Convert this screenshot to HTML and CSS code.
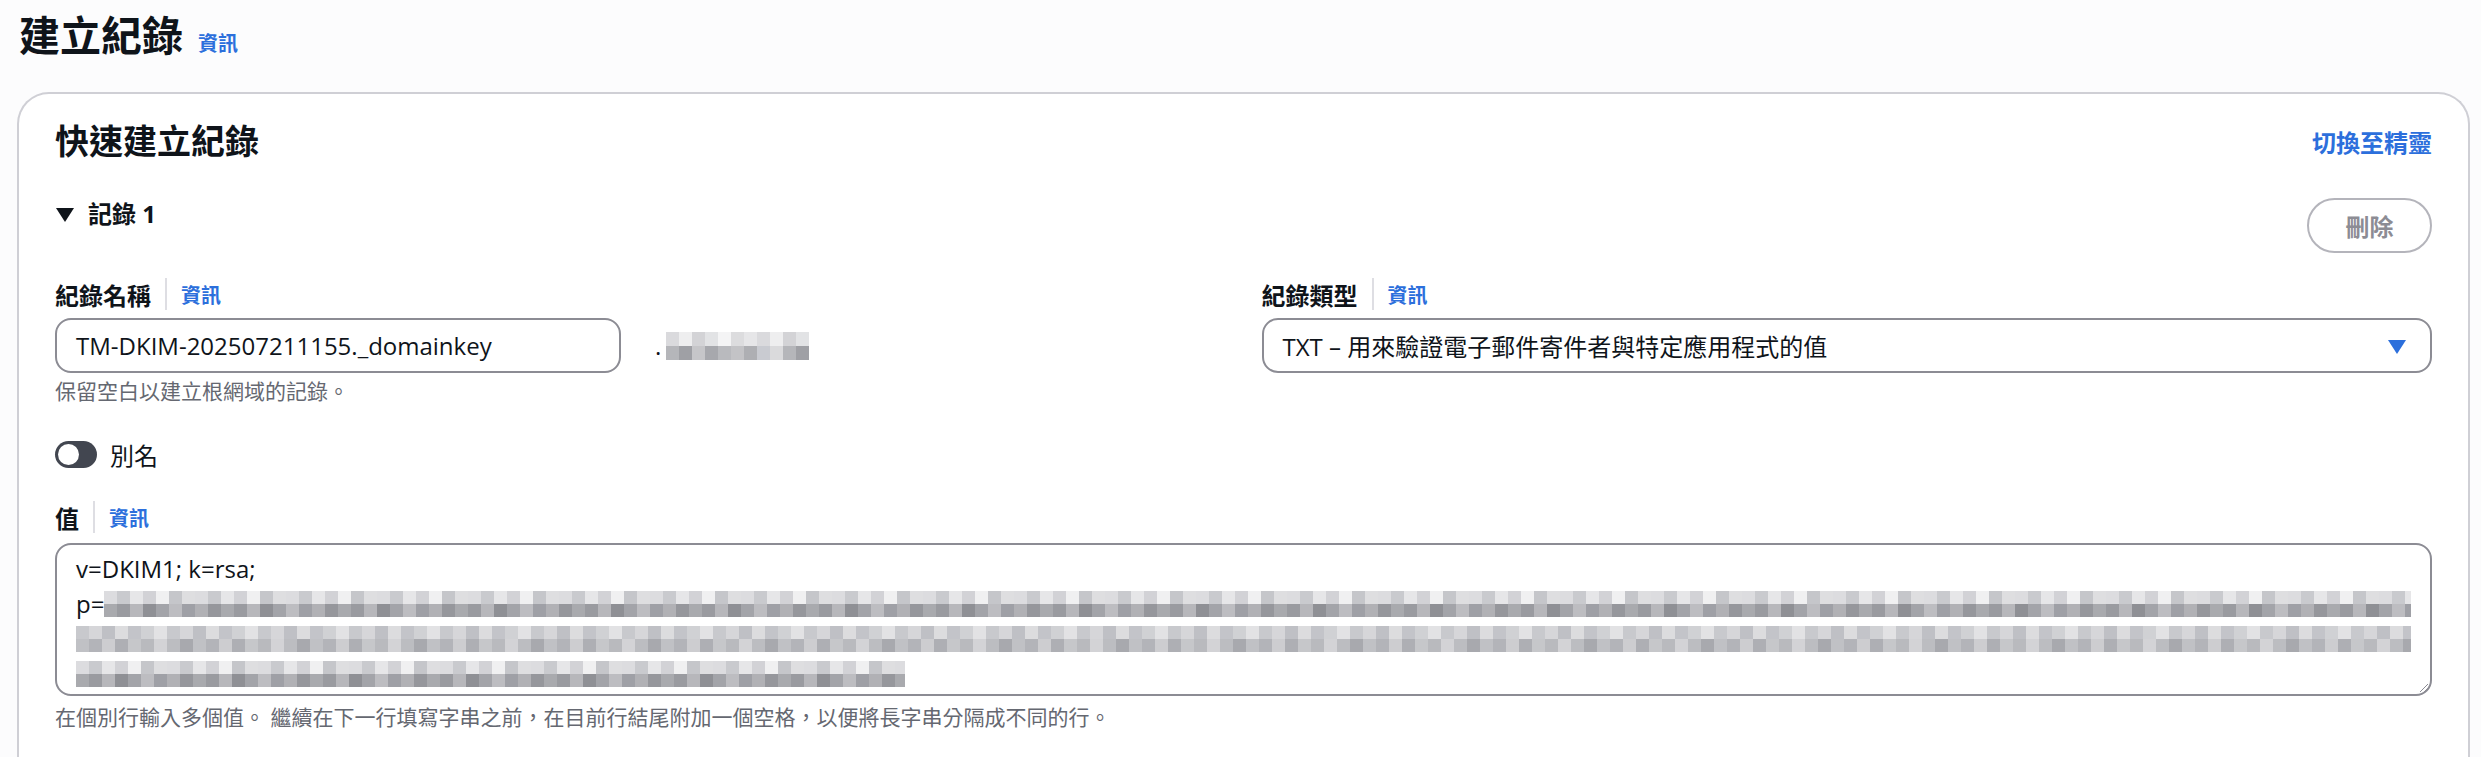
FILE: index.html
```html
<!DOCTYPE html>
<html lang="zh-Hant">
<head>
    <meta charset="UTF-8">
    <meta name="viewport" content="width=device-width, initial-scale=1.0">
    <title>建立紀錄</title>
    <link rel="stylesheet" href="styles.css">
</head>
<body>
    <div class="page-title">
        <h1>建立紀錄</h1>
        <a class="info-link" href="#">資訊</a>
    </div>

    <div class="card">
        <div class="card-header">
            <h2>快速建立紀錄</h2>
            <a class="wizard-link" href="#">切換至精靈</a>
        </div>

        <div class="record-header">
            <div class="record-title"><span class="caret-down"></span>記錄 1</div>
            <button class="remove-btn">刪除</button>
        </div>

        <div class="field-row">
            <div class="field-col">
                <div class="label-line">
                    <span class="label">紀錄名稱</span>
                    <span class="divider"></span>
                    <a class="info-link small" href="#">資訊</a>
                </div>
                <div class="name-line">
                    <div class="text-input">TM-DKIM-202507211155._domainkey</div>
                    <span class="domain">.<span class="blur blur-domain"></span></span>
                </div>
                <div class="hint">保留空白以建立根網域的記錄。</div>
            </div>
            <div class="field-col">
                <div class="label-line">
                    <span class="label">紀錄類型</span>
                    <span class="divider"></span>
                    <a class="info-link small" href="#">資訊</a>
                </div>
                <div class="select">
                    <span>TXT – 用來驗證電子郵件寄件者與特定應用程式的值</span>
                    <span class="select-caret"></span>
                </div>
            </div>
        </div>

        <div class="toggle-line">
            <span class="toggle"><span class="knob"></span></span>
            <span>別名</span>
        </div>

        <div class="label-line">
            <span class="label">值</span>
            <span class="divider"></span>
            <a class="info-link small" href="#">資訊</a>
        </div>
        <div class="textarea">
            <div class="ta-line">v=DKIM1; k=rsa;</div>
            <div class="ta-line">p=<span class="blur blur-row" style="width: 2326px"></span></div>
            <div class="ta-line"><span class="blur blur-row alt" style="width: 2340px"></span></div>
            <div class="ta-line"><span class="blur blur-row" style="width: 829px"></span></div>
            <span class="resize-grip"></span>
        </div>
        <div class="hint">在個別行輸入多個值。 繼續在下一行填寫字串之前，在目前行結尾附加一個空格，以便將長字串分隔成不同的行。</div>
    </div>
</body>
</html>
```

FILE: styles.css
```css
body {
    margin: 0;
    background-color: #fcfcfd;
    color: #0f141a;
    font-family: "Open Sans", "Noto Sans CJK TC", sans-serif;
}

.page-title {
    display: flex;
    align-items: baseline;
    gap: 15px;
    padding: 9px 19px 0;
}
.page-title h1 {
    margin: 0;
    font-size: 41px;
    line-height: 52px;
    font-weight: 700;
}

.info-link {
    color: #2c6fdc;
    text-decoration: none;
    font-weight: 700;
    font-size: 20px;
}
.info-link.small {
    font-size: 20px;
}

.card {
    margin: 31px 11px 0 17px;
    background: #ffffff;
    border: 2px solid #cfcfd5;
    border-bottom: none;
    border-radius: 32px 32px 0 0;
    padding: 25px 36px 40px;
    min-height: 700px;
}

.card-header {
    display: flex;
    justify-content: space-between;
    align-items: center;
    height: 44px;
}
.card-header h2 {
    margin: 0;
    font-size: 34px;
    line-height: 44px;
    font-weight: 700;
}
.wizard-link {
    color: #2c6fdc;
    text-decoration: none;
    font-weight: 700;
    font-size: 24px;
}

.record-header {
    display: flex;
    justify-content: space-between;
    align-items: flex-start;
    margin-top: 35px;
}
.record-title {
    display: flex;
    align-items: center;
    font-size: 24px;
    line-height: 32px;
    font-weight: 700;
}
.caret-down {
    width: 0;
    height: 0;
    border-left: 9px solid transparent;
    border-right: 9px solid transparent;
    border-top: 14px solid #0f141a;
    margin: 2px 14px 0 1px;
}
.remove-btn {
    width: 125px;
    height: 55px;
    border: 2px solid #b4b4bb;
    border-radius: 28px;
    background: #ffffff;
    color: #8c8c94;
    font-family: "Open Sans", "Noto Sans CJK TC", sans-serif;
    font-size: 24px;
    font-weight: 700;
    padding: 0;
}

.field-row {
    display: grid;
    grid-template-columns: 1fr 1fr;
    gap: 36px;
    margin-top: 25px;
}

.label-line {
    display: flex;
    align-items: center;
    height: 32px;
}
.label {
    font-size: 24px;
    font-weight: 700;
}
.divider {
    width: 2px;
    height: 32px;
    background: #dedee3;
    margin: 0 14px;
}

.name-line {
    display: flex;
    align-items: center;
    margin-top: 8px;
}
.text-input {
    box-sizing: border-box;
    width: 566px;
    height: 55px;
    border: 2px solid #8c8c94;
    border-radius: 16px;
    padding: 0 19px;
    font-size: 24px;
    line-height: 51px;
    white-space: nowrap;
}
.domain {
    display: flex;
    align-items: flex-end;
    margin-left: 34px;
    font-size: 24px;
    line-height: 28px;
}

.hint {
    color: #656871;
    font-size: 21px;
    line-height: 28px;
    margin-top: 4px;
}

.select {
    box-sizing: border-box;
    height: 55px;
    margin-top: 8px;
    border: 2px solid #8c8c94;
    border-radius: 16px;
    padding: 0 24px 0 19px;
    display: flex;
    justify-content: space-between;
    align-items: center;
    font-size: 24px;
}
.select-caret {
    width: 0;
    height: 0;
    border-left: 9px solid transparent;
    border-right: 9px solid transparent;
    border-top: 14px solid #2c6fdc;
    margin-top: 3px;
}

.toggle-line {
    display: flex;
    align-items: center;
    gap: 13px;
    margin-top: 33px;
    height: 32px;
    font-size: 24px;
}
.toggle {
    box-sizing: border-box;
    width: 42px;
    height: 27px;
    border-radius: 14px;
    background: #424650;
    display: flex;
    align-items: center;
    padding-left: 3px;
}
.knob {
    width: 21px;
    height: 21px;
    border-radius: 50%;
    background: #ffffff;
}

.toggle-line + .label-line {
    margin-top: 31px;
}

.textarea {
    position: relative;
    box-sizing: border-box;
    height: 153px;
    margin-top: 10px;
    border: 2px solid #8c8c94;
    border-radius: 16px;
    padding: 6px 19px 0;
    font-size: 24px;
    line-height: 35px;
}
.ta-line {
    display: flex;
    align-items: center;
    height: 35px;
    white-space: nowrap;
}
.textarea + .hint {
    margin-top: 7px;
}

/* pixelated placeholder for masked values */
.blur {
    display: inline-block;
    background-repeat: repeat-x;
    background-size: 91px 50%, 117px 50%;
    background-position: 0 0, 0 100%;
}
.blur-row {
    height: 26px;
    background-image:
        repeating-linear-gradient(90deg, #dcdcdf 0 13px, #c9cace 13px 26px, #e6e6e8 26px 39px, #d2d2d6 39px 52px, #f0f0f1 52px 65px, #c5c6ca 65px 78px, #dedee0 78px 91px),
        repeating-linear-gradient(90deg, #a9aaae 0 13px, #9a9ba0 13px 26px, #b7b7bb 26px 39px, #8f9095 39px 52px, #a3a4a9 52px 65px, #bdbdc1 65px 78px, #9fa0a6 78px 91px, #b1b1b5 91px 104px, #96979c 104px 117px);
}
.blur-row.alt {
    background-image:
        repeating-linear-gradient(90deg, #c8c9cd 0 13px, #d6d6d9 13px 26px, #bfc0c5 26px 39px, #dcdcde 39px 52px, #c3c4c9 52px 65px, #d0d1d4 65px 78px, #e2e2e4 78px 91px),
        repeating-linear-gradient(90deg, #c0c1c5 0 13px, #b3b4b9 13px 26px, #cdcdd0 26px 39px, #aeafb4 39px 52px, #c6c7ca 52px 65px, #b9babe 65px 78px, #d3d3d6 78px 91px, #bcbdc1 91px 104px, #a8a9ae 104px 117px);
}
.blur-domain {
    width: 143px;
    height: 28px;
    margin-left: 5px;
    background-image:
        repeating-linear-gradient(90deg, #dadadd 0 13px, #eeeeef 13px 26px, #d3d3d6 26px 39px, #e2e3e5 39px 52px, #f4f4f5 52px 65px, #dcdcde 65px 78px, #e6e6e8 78px 91px),
        repeating-linear-gradient(90deg, #b5b6ba 0 13px, #9fa0a5 13px 26px, #c6c6c9 26px 39px, #a7a8ad 39px 52px, #b9babe 52px 65px, #c3c3c6 65px 78px, #aeafb3 78px 91px, #c9cbd1 91px 104px, #dadadc 104px 117px);
}

.resize-grip {
    position: absolute;
    right: 2px;
    bottom: 2px;
    width: 8px;
    height: 8px;
    background: linear-gradient(135deg, transparent 45%, #8c8c94 45% 55%, transparent 55% 70%, #8c8c94 70% 80%, transparent 80%);
}
```
